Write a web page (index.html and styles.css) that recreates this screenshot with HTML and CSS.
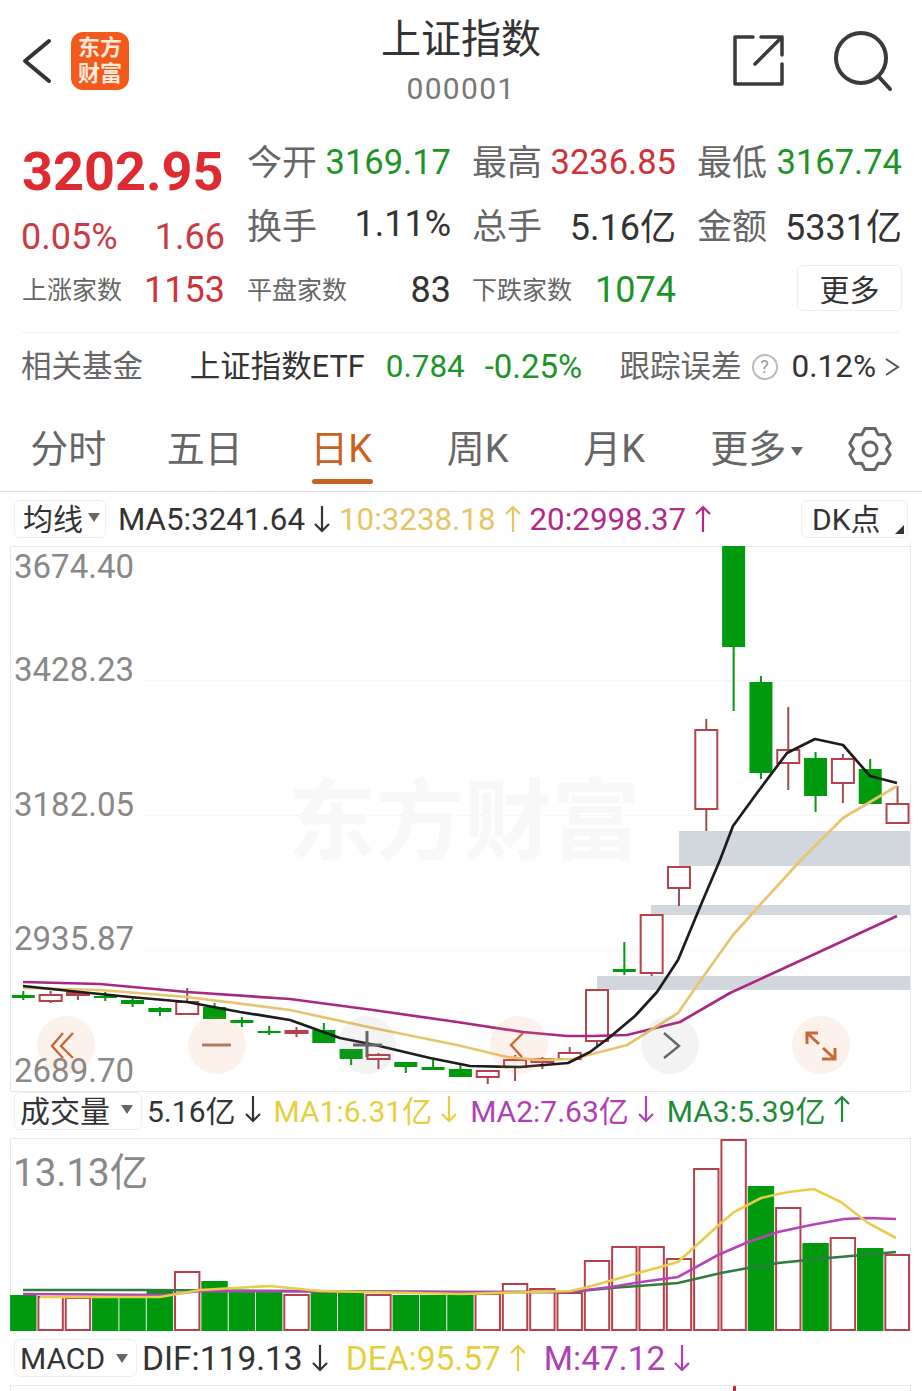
FILE: index.html
```html
<!DOCTYPE html>
<html lang="zh-CN">
<head>
  <meta charset="UTF-8">
  <title>上证指数</title>
  <link rel="stylesheet" href="styles.css">
</head>
<body>
  <svg class="defs" width="0" height="0">
    <symbol id="down" viewBox="0 0 16 28"><path d="M8 1v25M1 19l7 7 7-7"/></symbol>
    <symbol id="up" viewBox="0 0 16 28"><path d="M8 27V2M1 9l7-7 7 7"/></symbol>
  </svg>

  <header class="topbar">
    <div class="top-left">
      <svg class="back" width="30" height="46" viewBox="0 0 30 46"><path d="M27 3 3 23l24 20"/></svg>
      <div class="logo">东方<br>财富</div>
    </div>
    <div class="title">
      <h1>上证指数</h1>
      <p>000001</p>
    </div>
    <div class="top-right">
      <svg class="share" width="52" height="52" viewBox="0 0 52 52"><path d="M21 3H3v47h47V30M23 30 50 3M29 3h21v18"/></svg>
      <svg class="search" width="60" height="62" viewBox="0 0 60 62"><circle cx="28" cy="27" r="25"/><path d="M46 46l11 12"/></svg>
    </div>
  </header>

  <section class="quote">
    <div class="quote-left">
      <div class="price">3202.95</div>
      <div class="change"><span>0.05%</span><span>1.66</span></div>
      <div class="cell"><span class="small">上涨家数</span><span class="num red">1153</span></div>
    </div>
    <div class="quote-grid">
      <div class="cell"><span class="label">今开</span><span class="val green">3169.17</span></div>
      <div class="cell"><span class="label">最高</span><span class="val red">3236.85</span></div>
      <div class="cell"><span class="label">最低</span><span class="val green">3167.74</span></div>
      <div class="cell"><span class="label">换手</span><span class="val wide">1.11%</span></div>
      <div class="cell"><span class="label">总手</span><span class="val wide">5.16亿</span></div>
      <div class="cell"><span class="label">金额</span><span class="val wide">5331亿</span></div>
      <div class="cell"><span class="small">平盘家数</span><span class="num">83</span></div>
      <div class="cell"><span class="small">下跌家数</span><span class="num green">1074</span></div>
      <div class="cell cell-end"><button class="more">更多</button></div>
    </div>
  </section>

  <section class="fund">
    <span class="fund-title">相关基金</span>
    <span class="fund-name">上证指数ETF</span>
    <span class="fund-price green">0.784</span>
    <span class="fund-pct green">-0.25%</span>
    <span class="fund-label">跟踪误差</span>
    <span class="help">?</span>
    <span class="fund-err">0.12%</span>
    <svg class="fund-go" width="15" height="20" viewBox="0 0 15 20"><path d="M1 2l12 8-12 8"/></svg>
  </section>

  <nav class="tabs">
    <a class="tab">分时</a>
    <a class="tab">五日</a>
    <a class="tab active">日K</a>
    <a class="tab">周K</a>
    <a class="tab">月K</a>
    <a class="tab tab-more">更多<i class="caret"></i></a>
    <svg class="gear" width="44" height="44" viewBox="-22 -22 44 44">
      <path d="M-5.1-20.4H5.1L8.25-14.3 15.1-14.6 20.2-5.8 16.5 0 20.2 5.8 15.1 14.6 8.25 14.3 5.1 20.4H-5.1L-8.25 14.3-15.1 14.6-20.2 5.8-16.5 0-20.2-5.8-15.1-14.6-8.25-14.3Z"/>
      <circle r="7"/>
    </svg>
  </nav>

  <div class="legend legend-k">
    <span class="picker picker-k">均线<i class="caret"></i></span>
    <span class="item">MA5:3241.64<svg class="arrow"><use href="#down"/></svg></span>
    <span class="item yellow-k">10:3238.18<svg class="arrow"><use href="#up"/></svg></span>
    <span class="item pink-k">20:2998.37<svg class="arrow"><use href="#up"/></svg></span>
    <span class="picker picker-dk">DK点<i class="corner"></i></span>
  </div>

  <svg class="chart" id="kchart" width="901" height="546" viewBox="10 546 901 546">
    <rect class="frame" x="10.5" y="546.5" width="900" height="545"/>
    <path class="grid" d="M140 680.5H910M140 815.5H910M140 950.5H910"/>
    <text class="watermark" x="288" y="852">东方财富</text>
    <path class="band" d="M679 831h231v35H679zM651 905h259v10H651zM597 976h313v14H597z"/>
    <g id="candles"></g>
    <polyline class="line ma20" points="23,982 100,984 187,992 290,999 373,1010 457,1022 523,1032 567,1036 593,1036 627,1035 680,1022 730,993 817,953 897,916"/>
    <polyline class="line ma10" points="23,988 100,990 187,997 290,1010 373,1028 457,1045 507,1057 540,1060 573,1059 627,1045 678,1013 703,977 733,935 760,905 800,861 843,818 870,802 897,786"/>
    <polyline class="line ma5" points="23,986 80,992 130,997 187,1002 240,1012 290,1020 340,1038 375,1045 430,1058 470,1066 520,1067 568,1063 590,1052 610,1037 635,1016 657,992 678,960 700,907 720,860 733,826 757,793 787,753 815,739 843,745 870,776 897,783"/>

    <circle class="btn warm" cx="66" cy="1045" r="29"/>
    <circle class="btn warm" cx="217" cy="1045" r="29"/>
    <circle class="btn cool" cx="367" cy="1045" r="29"/>
    <circle class="btn warm" cx="519" cy="1045" r="29"/>
    <circle class="btn cool" cx="670" cy="1045" r="29"/>
    <circle class="btn warm" cx="821" cy="1045" r="29"/>
    <path class="ico orange" d="M63 1033 52 1046l11 12M73 1033 61 1046l12 12"/>
    <path class="ico brown" d="M202 1045h29"/>
    <path class="ico gray thick" d="M353 1045h29M367 1031v26"/>
    <path class="ico orange" d="M523 1033l-12 12 11 12"/>
    <path class="ico gray" d="M664 1033l15 13-15 12"/>
    <path class="ico orange thick" d="M807 1044v-11h11M807 1033l12 11M835 1048v11h-13M835 1059l-12-11"/>

    <text class="axis" x="14" y="578">3674.40</text>
    <text class="axis" x="14" y="681">3428.23</text>
    <text class="axis" x="14" y="816">3182.05</text>
    <text class="axis" x="14" y="950">2935.87</text>
    <text class="axis" x="14" y="1082">2689.70</text>
  </svg>

  <div class="legend legend-v">
    <span class="picker picker-v">成交量<i class="caret"></i></span>
    <span class="item">5.16亿<svg class="arrow"><use href="#down"/></svg></span>
    <span class="item yellow">MA1:6.31亿<svg class="arrow"><use href="#down"/></svg></span>
    <span class="item purple">MA2:7.63亿<svg class="arrow"><use href="#down"/></svg></span>
    <span class="item dgreen">MA3:5.39亿<svg class="arrow"><use href="#up"/></svg></span>
  </div>

  <svg class="chart" id="vchart" width="901" height="193" viewBox="10 1138 901 193">
    <rect class="frame" x="10.5" y="1138.5" width="900" height="192"/>
    <g id="volumes"></g>
    <polyline class="vline vma3" points="23,1290 147,1290 300,1291 461,1292 570,1292 611,1288 678,1283 721,1273 748,1268 778,1263 828,1258 896,1252"/>
    <polyline class="vline vma2" points="23,1294 165,1295 200,1291 461,1292 570,1292 611,1287 641,1282 678,1277 718,1255 748,1242 778,1232 811,1225 844,1219 868,1218 896,1219"/>
    <polyline class="vline vma1" points="40,1297 160,1297 200,1290 270,1286 320,1291 461,1294 570,1291 584,1288 678,1262 721,1223 734,1212 761,1198 788,1192 814,1189 841,1202 868,1223 896,1238"/>
    <text class="axis axis-v" x="13" y="1186">13.13亿</text>
  </svg>

  <div class="legend legend-m">
    <span class="picker picker-m">MACD<i class="caret"></i></span>
    <span class="item">DIF:119.13<svg class="arrow"><use href="#down"/></svg></span>
    <span class="item yellow">DEA:95.57<svg class="arrow"><use href="#up"/></svg></span>
    <span class="item purple">M:47.12<svg class="arrow"><use href="#down"/></svg></span>
  </div>
  <div class="macd"><i class="macd-bar"></i></div>

  <script src="chart.js"></script>
</body>
</html>
```

FILE: styles.css
```css
*{
  box-sizing: border-box;
}
html, body{
  margin: 0;
  height: 1391px;
  overflow: hidden;
  background: #fff;
}
body{
  width: 922px;
  font-family: Roboto, "Noto Sans CJK SC", sans-serif;
  color: #333;
}
.defs{
  position: absolute;
}
.red{ color: #cf3238; }
.green{ color: #1c9428; }

/* top bar */
.topbar{
  display: grid;
  grid-template-columns: 1fr auto 1fr;
  height: 130px;
}
.top-left{
  display: flex;
  align-items: flex-start;
  padding: 38px 0 0 22px;
}
.back{
  fill: none;
  stroke: #333;
  stroke-width: 4;
  stroke-linecap: round;
  stroke-linejoin: round;
}
.logo{
  width: 58px;
  height: 58px;
  margin: -6px 0 0 19px;
  padding-top: 3px;
  border-radius: 12px;
  background: #f4591c;
  color: #ffe9dc;
  font-size: 22px;
  font-weight: 700;
  line-height: 26px;
  text-align: center;
}
.title{
  text-align: center;
}
.title h1{
  margin: 12px 0 0;
  font-size: 40px;
  font-weight: 400;
  line-height: 56px;
}
.title p{
  margin: 3px 0 0;
  font-size: 30px;
  line-height: 36px;
  letter-spacing: 1.3px;
  color: #777;
}
.top-right{
  display: flex;
  justify-content: flex-end;
  align-items: flex-start;
  padding: 34px 29px 0 0;
  gap: 49px;
}
.share, .search{
  fill: none;
  stroke: #3a3a3a;
  stroke-width: 3.5;
  stroke-linejoin: round;
  stroke-linecap: round;
}
.search{
  stroke-width: 4;
  margin-top: -3px;
}

/* quote */
.quote{
  display: flex;
  height: 192px;
  padding-left: 22px;
}
.quote-left{
  width: 203px;
  margin-right: 22px;
}
.price{
  height: 82px;
  font-size: 54px;
  font-weight: 700;
  line-height: 84px;
  color: #de2b31;
  white-space: nowrap;
}
.change{
  display: flex;
  justify-content: space-between;
  height: 46px;
  margin-left: -1px;
  font-size: 36px;
  line-height: 50px;
  color: #c93c44;
}
.quote-grid{
  display: grid;
  grid-template-columns: 204px 204px 205px;
  grid-auto-rows: 64px;
  column-gap: 21px;
}
.cell{
  display: flex;
  justify-content: space-between;
  align-items: center;
  height: 64px;
}
.cell-end{
  justify-content: flex-end;
}
.label{
  margin-bottom: 6px;
  font-size: 35px;
  color: #666;
  white-space: nowrap;
}
.val{
  font-size: 34.5px;
  white-space: nowrap;
}
.wide{
  margin-bottom: 4px;
  font-size: 36px;
}
.small{
  margin-bottom: 4px;
  font-size: 25px;
  color: #666;
  white-space: nowrap;
}
.num{
  font-size: 36px;
  white-space: nowrap;
}
.more{
  width: 105px;
  height: 46px;
  margin-top: -4px;
  padding: 0 0 5px;
  border: 1px solid #eee;
  border-radius: 6px;
  background: #fff;
  font: inherit;
  font-size: 30px;
  color: #333;
}

/* fund row */
.fund{
  display: flex;
  align-items: center;
  height: 68px;
  margin: 10px 22px 0;
  border-top: 1px solid #f1f1f1;
  font-size: 30.5px;
  white-space: nowrap;
}
.fund-title{ margin: 0 0 6px -1px; color: #666; width: 169px; }
.fund-name{ width: 196px; margin-bottom: 6px; }
.fund-price{ width: 99px; font-size: 31.5px; }
.fund-pct{ width: 135px; font-size: 33px; }
.fund-label{ color: #666; margin-bottom: 6px; }
.help{
  width: 26px;
  height: 26px;
  margin: 0 14px 0 10px;
  border: 2px solid #bbb;
  border-radius: 50%;
  font-size: 18px;
  line-height: 22px;
  text-align: center;
  color: #999;
}
.fund-err{ font-size: 31.5px; }
.fund-go{
  margin-left: 9px;
  fill: none;
  stroke: #555;
  stroke-width: 2;
}

/* period tabs */
.tabs{
  display: flex;
  height: 92px;
  border-bottom: 1px solid #ddd;
  padding-top: 6px;
  align-items: center;
}
.tab{
  position: relative;
  width: 136.5px;
  font-size: 38px;
  line-height: 50px;
  text-align: center;
  color: #666;
}
.tab-more{
  padding-left: 12px;
}
.tab.active{
  color: #c8621e;
}
.tab.active::after{
  content: "";
  position: absolute;
  left: 39px;
  right: 37px;
  bottom: -10px;
  height: 5px;
  border-radius: 3px;
  background: #c8621e;
}
.caret{
  display: inline-block;
  margin-left: 5px;
  vertical-align: middle;
  border-left: 6px solid transparent;
  border-right: 6px solid transparent;
  border-top: 9px solid #666;
}
.gear{
  margin-left: 29px;
  fill: none;
  stroke: #666;
  stroke-width: 3;
  stroke-linejoin: round;
}

/* indicator legends */
.legend{
  display: flex;
  align-items: center;
  padding-left: 14px;
  font-size: 31.3px;
  white-space: nowrap;
}
.legend-k{ height: 54px; }
.legend-v{ height: 46px; padding-bottom: 8px; font-size: 30px; }
.legend-m{ height: 54px; padding-top: 0; font-size: 33.5px; }
.picker{
  display: flex;
  align-items: center;
  justify-content: space-between;
  height: 38px;
  padding: 0 8px 4px 5px;
  border: 1px solid #eee;
  border-radius: 6px;
  font-size: 30px;
}
.picker-k{ width: 92px; padding-left: 8px; margin-right: 12px; }
.picker-v{ width: 128px; margin-right: 5px; }
.picker-m{ width: 123px; margin-right: 5px; padding-bottom: 0; }
.picker-dk{
  position: relative;
  width: 107px;
  margin-left: auto;
  margin-right: 14px;
  padding-left: 10px;
  justify-content: flex-start;
}
.corner{
  position: absolute;
  right: 3px;
  bottom: 3px;
  border-left: 9px solid transparent;
  border-bottom: 9px solid #333;
}
.item{
  display: flex;
  align-items: center;
  margin-right: 9px;
}
.legend-v .item{ margin: 0 13px 4px 0; }
.legend-m .item{ margin-right: 18px; }
.arrow{
  width: 16px;
  height: 28px;
  margin-left: 9px;
  fill: none;
  stroke: currentColor;
  stroke-width: 2.2;
}
.yellow-k{ color: #e8c468; }
.pink-k{ color: #b4288a; }
.yellow{ color: #e6cf3e; }
.purple{ color: #b03fb4; }
.dgreen{ color: #1e8a3a; }

/* charts */
.chart{
  display: block;
  margin-left: 10px;
}
.frame{
  fill: #fff;
  stroke: #e8e8e8;
}
.grid{
  fill: none;
  stroke: #f0f0f0;
  stroke-dasharray: 2 2;
}
.watermark{
  font-size: 88px;
  font-weight: 700;
  fill: #f8f8f8;
}
.band{
  fill: #d2d6dd;
}
.line{
  fill: none;
  stroke-width: 2.7;
  stroke-linejoin: round;
}
.ma5{ stroke: #1c1c1c; }
.ma10{ stroke: #e8c46e; }
.ma20{ stroke: #a82a80; }
.btn{
  stroke: none;
}
.warm{ fill: rgba(240, 150, 100, .13); }
.cool{ fill: rgba(120, 120, 120, .09); }
.ico{
  fill: none;
  stroke-width: 2.4;
}
.thick{ stroke-width: 3; }
.orange{ stroke: #c8683a; }
.brown{ stroke: #ac7a5c; stroke-width: 3; }
.gray{ stroke: #666; }
.axis{
  font-size: 33px;
  fill: #888;
}
.axis-v{
  font-size: 38.5px;
}
.vline{
  fill: none;
  stroke-width: 2.6;
}
.vma1{ stroke: #e8cc4a; }
.vma2{ stroke: #b644b8; }
.vma3{ stroke: #2e7d3c; }
.macd{
  position: relative;
  height: 10px;
  margin: 0 11px 0 10px;
  border: 1px solid #e8e8e8;
  background: #fff;
}
.macd-bar{
  position: absolute;
  left: 722px;
  top: 0;
  width: 3px;
  height: 8px;
  background: #c8282e;
}
```

FILE: chart.js
```js
var svgNS = 'http://www.w3.org/2000/svg';
var RED = '#b5414a';
var WICK = '#a04c50';
var GREEN = '#009a0e';

// [body top, body bottom, wick top, wick bottom, red?]
var candles = [
  [995, 998, 991, 1000, 0],
  [995, 1001, 991, 1003, 1],
  [993, 995, 991, 1000, 1],
  [996, 998, 992, 1001, 0],
  [1000, 1004, 998, 1007, 0],
  [1008, 1012, 1007, 1016, 0],
  [1002, 1014, 988, 1014, 1],
  [1007, 1019, 1003, 1019, 0],
  [1020, 1023, 1017, 1027, 0],
  [1031, 1033, 1026, 1035, 0],
  [1031, 1033, 1027, 1037, 1],
  [1030, 1043, 1023, 1043, 0],
  [1049, 1059, 1049, 1065, 0],
  [1055, 1059, 1053, 1069, 1],
  [1062, 1067, 1062, 1073, 0],
  [1067, 1070, 1060, 1070, 0],
  [1069, 1077, 1065, 1077, 0],
  [1071, 1077, 1071, 1084, 1],
  [1060, 1067, 1055, 1081, 1],
  [1059, 1062, 1057, 1069, 1],
  [1053, 1059, 1047, 1059, 1],
  [990, 1041, 990, 1047, 1],
  [969, 972, 942, 975, 0],
  [915, 973, 915, 976, 1],
  [867, 888, 867, 906, 1],
  [730, 809, 719, 831, 1],
  [546, 647, 546, 711, 0],
  [682, 773, 676, 779, 0],
  [750, 763, 707, 790, 1],
  [758, 796, 752, 812, 0],
  [759, 783, 754, 803, 1],
  [769, 804, 759, 804, 0],
  [804, 823, 786, 823, 1]
];

// [bar top, red?]
var volumes = [
  [1295, 0], [1297, 1], [1298, 1], [1296, 0], [1295, 0], [1291, 0],
  [1272, 1], [1281, 0], [1291, 0], [1291, 0], [1295, 1], [1291, 0],
  [1291, 0], [1295, 1], [1295, 0], [1295, 0], [1295, 0], [1294, 1],
  [1284, 1], [1289, 1], [1293, 1], [1261, 1], [1247, 1], [1247, 1],
  [1259, 1], [1169, 1], [1140, 1], [1186, 0], [1208, 1], [1243, 0],
  [1238, 1], [1248, 0], [1255, 1]
];

function centre(i) {
  return 23.3 + 27.32 * i;
}

function addRect(parent, x, y, w, h, fill, stroke, strokeWidth) {
  var rect = document.createElementNS(svgNS, 'rect');
  rect.setAttribute('x', x);
  rect.setAttribute('y', y);
  rect.setAttribute('width', w);
  rect.setAttribute('height', h);
  rect.setAttribute('fill', fill);
  if (stroke) {
    rect.setAttribute('stroke', stroke);
    rect.setAttribute('stroke-width', strokeWidth);
  }
  parent.append(rect);
}

var candleBox = document.querySelector('#candles');
candles.forEach(function(c, i) {
  var x = centre(i);
  var isRed = c[4] === 1;
  addRect(candleBox, x - 1, c[2], 2, c[3] - c[2], isRed ? WICK : GREEN);
  if (isRed) {
    addRect(candleBox, x - 11, c[0], 22, c[1] - c[0], '#fff', RED, 2);
  } else {
    addRect(candleBox, x - 11.5, c[0], 23, c[1] - c[0], GREEN);
  }
});

var volumeBox = document.querySelector('#volumes');
volumes.forEach(function(v, i) {
  var x = Math.max(centre(i) - 13.2, 10);
  var right = Math.min(centre(i) + 13.2, 910);
  if (v[1] === 1) {
    addRect(volumeBox, x + 1, v[0], right - x - 2, 1330 - v[0], '#fff', RED, 2);
  } else {
    addRect(volumeBox, x, v[0], right - x, 1331 - v[0], GREEN);
  }
});
```
